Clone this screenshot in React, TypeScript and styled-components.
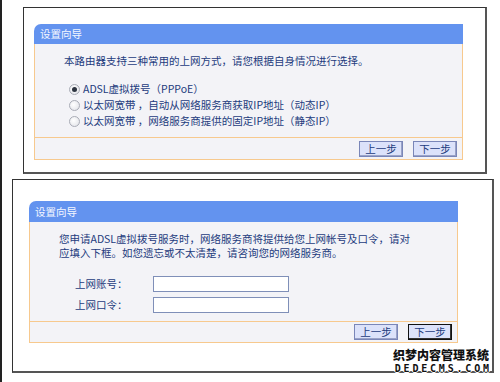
import React from 'react';
import styled, { createGlobalStyle } from 'styled-components';

const GlobalStyle = createGlobalStyle`
  html, body {
    margin: 0;
    padding: 0;
    background: #fff;
  }
  body {
    font-family: "Noto Sans CJK SC", "Liberation Sans", sans-serif;
  }
`;

const Page = styled.div`
  position: relative;
  width: 500px;
  height: 382px;
  box-sizing: border-box;
  border-left: 2px solid #222;
  background: #fff;
  overflow: hidden;
`;

const Shot = styled.div<{ left: number; top: number; width: number; height: number; padLeft: number; padTop: number }>`
  box-sizing: border-box;
  margin-left: ${(p) => p.left}px;
  margin-top: ${(p) => p.top}px;
  width: ${(p) => p.width}px;
  height: ${(p) => p.height}px;
  border: 1px solid #333;
  border-right: 2px solid #555;
  border-bottom: 2px solid #555;
  padding-left: ${(p) => p.padLeft}px;
  padding-top: ${(p) => p.padTop}px;
  background: #fff;
`;

const Panel = styled.div<{ height: number }>`
  width: 429px;
  height: ${(p) => p.height}px;
  display: flex;
  flex-direction: column;
`;

const Header = styled.div<{ h: number }>`
  height: ${(p) => p.h}px;
  background: #6393ef;
  border-top-left-radius: 7px;
  color: #f4f7ff;
  font-size: 10.5px;
  line-height: ${(p) => p.h}px;
  padding-left: 6px;
`;

const Body = styled.div`
  flex: 1;
  background: #f3f3f7;
  border-left: 1px solid #f7c98e;
  border-right: 1px solid #f7c98e;
  color: #1d3b7d;
  font-size: 10.5px;
`;

const Footer = styled.div<{ h: number }>`
  height: ${(p) => p.h}px;
  box-sizing: border-box;
  background: #f3f3f7;
  border: 1px solid #f7c98e;
  display: flex;
  justify-content: flex-end;
  align-items: center;
  gap: 10px;
  padding-right: 5px;
`;

const Btn = styled.button<{ focused?: boolean }>`
  width: 44px;
  height: 16px;
  padding: 0;
  box-sizing: border-box;
  background: #dce2fa;
  border: 1px solid ${(p) => (p.focused ? '#111' : '#7a86b8')};
  box-shadow: ${(p) => (p.focused ? 'inset -1px -1px 0 #333' : 'inset -1px -1px 0 #9aa3c8')};
  color: #1d3b7d;
  font-family: "Noto Sans CJK SC", sans-serif;
  font-size: 10.5px;
  line-height: 14px;
`;

const Intro = styled.div<{ top: number }>`
  padding: ${(p) => p.top}px 0 0 29px;
  line-height: 14px;
`;

const Options = styled.div`
  padding: 14px 0 0 34px;
  display: flex;
  flex-direction: column;
  gap: 2px;
`;

const Option = styled.label`
  display: flex;
  align-items: center;
  gap: 3px;
  height: 14px;
  line-height: 14px;
`;

const Radio = styled.span<{ checked?: boolean }>`
  width: 9px;
  height: 9px;
  border-radius: 50%;
  border: 1px solid #a9acb6;
  background: radial-gradient(circle at 40% 40%, #fff 0%, #dfe0e6 100%);
  display: flex;
  align-items: center;
  justify-content: center;
  &::after {
    content: '';
    display: ${(p) => (p.checked ? 'block' : 'none')};
    width: 5px;
    height: 5px;
    border-radius: 50%;
    background: #2d3440;
  }
`;

const Form = styled.div`
  padding: 16px 0 0 45px;
  display: grid;
  grid-template-columns: 78px 136px;
  row-gap: 5px;
  align-items: center;
`;

const Label = styled.span`
  line-height: 16px;
`;

const Input = styled.input`
  height: 16px;
  box-sizing: border-box;
  border: 1px solid #7f8fb8;
  background: #fff;
  margin: 0;
`;

const Watermark = styled.div`
  position: absolute;
  right: 11px;
  bottom: 7px;
  display: flex;
  flex-direction: column;
  align-items: flex-end;
  color: #111;
  text-shadow: 1px 0 0 #fff, -1px 0 0 #fff, 0 1px 0 #fff, 0 -1px 0 #fff;
`;

const WmTitle = styled.span`
  font-size: 12px;
  font-weight: 900;
  line-height: 17px;
  letter-spacing: 0;
`;

const WmDomain = styled.span`
  font-family: "DejaVu Sans Mono", monospace;
  font-size: 10px;
  font-weight: bold;
  line-height: 12px;
  letter-spacing: 2.8px;
  margin-right: -2.8px;
`;

export default function App() {
  return (
    <Page>
      <GlobalStyle />
      <Shot left={21} top={7} width={464} height={167} padLeft={10} padTop={16}>
        <Panel height={136}>
          <Header h={20}>设置向导</Header>
          <Body>
            <Intro top={10}>本路由器支持三种常用的上网方式，请您根据自身情况进行选择。</Intro>
            <Options>
              <Option><Radio checked />ADSL虚拟拨号（PPPoE）</Option>
              <Option><Radio />以太网宽带 ，自动从网络服务商获取IP地址（动态IP）</Option>
              <Option><Radio />以太网宽带 ，网络服务商提供的固定IP地址（静态IP）</Option>
            </Options>
          </Body>
          <Footer h={23}>
            <Btn>上一步</Btn>
            <Btn>下一步</Btn>
          </Footer>
        </Panel>
      </Shot>
      <Shot left={10} top={5} width={482} height={194} padLeft={16} padTop={21}>
        <Panel height={142}>
          <Header h={21}>设置向导</Header>
          <Body>
            <Intro top={10}>
              您申请ADSL虚拟拨号服务时，网络服务商将提供给您上网帐号及口令，请对
              <br />
              应填入下框。如您遗忘或不太清楚，请咨询您的网络服务商。
            </Intro>
            <Form>
              <Label>上网账号：</Label>
              <Input />
              <Label>上网口令：</Label>
              <Input type="password" />
            </Form>
          </Body>
          <Footer h={22}>
            <Btn>上一步</Btn>
            <Btn focused>下一步</Btn>
          </Footer>
        </Panel>
      </Shot>
      <Watermark>
        <WmTitle>织梦内容管理系统</WmTitle>
        <WmDomain>DEDECMS.COM</WmDomain>
      </Watermark>
    </Page>
  );
}
